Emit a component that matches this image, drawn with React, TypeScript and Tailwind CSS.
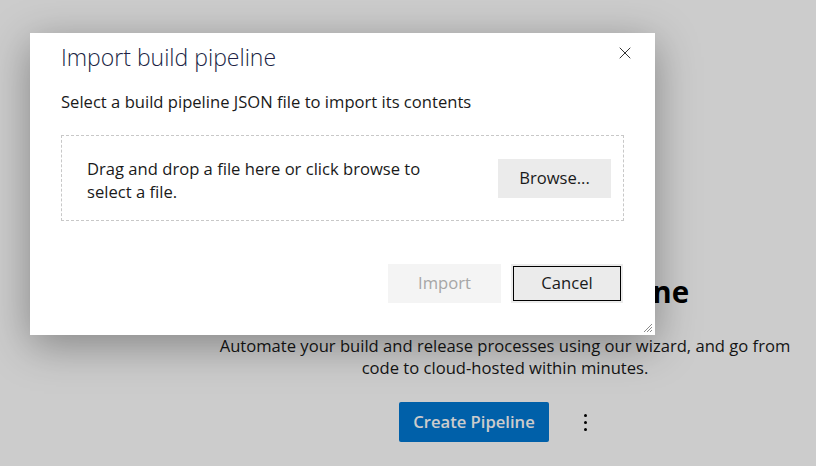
import { X } from "lucide-react";

const font = { fontFamily: '"Open Sans", "Noto Sans", sans-serif' };

function ResizeGrip() {
  return (
    <svg width="12" height="12" viewBox="0 0 12 12" className="text-[#8a8a8a]">
      <path d="M11 3 L3 11 M11 6 L6 11 M11 9 L9 11" stroke="currentColor" strokeWidth="1" />
    </svg>
  );
}

export default function App() {
  return (
    <div
      className="relative h-[466px] w-[816px] overflow-hidden bg-white text-[#1a1a1a]"
      style={font}
    >
      {/* page behind the dialog */}
      <div className="flex h-full pl-[194px]">
        <div className="flex flex-1 flex-col items-center pt-[273px]">
          <h1 className="text-[29.5px] font-bold leading-[38px] text-black">
            Create your first pipeline
          </h1>
          <p className="mt-[24px] max-w-[590px] text-center text-[16.6px] leading-[22px]">
            Automate your build and release processes using our wizard, and go from code to
            cloud-hosted within minutes.
          </p>
          <div className="mt-[23px] flex items-center gap-[35px] pr-[24px]">
            <button className="h-[40px] w-[150px] rounded-[2px] bg-[#0078d4] text-[16.6px] font-semibold text-white">
              Create Pipeline
            </button>
            <span className="flex flex-col gap-[4px]">
              <span className="h-[3px] w-[3px] rounded-full bg-black" />
              <span className="h-[3px] w-[3px] rounded-full bg-black" />
              <span className="h-[3px] w-[3px] rounded-full bg-black" />
            </span>
          </div>
        </div>
      </div>

      {/* dim overlay */}
      <div className="absolute inset-0 bg-black/20" />

      {/* dialog */}
      <div className="absolute left-[30px] top-[33px] flex h-[302px] w-[625px] flex-col bg-white px-[31px] pt-[8px] shadow-[0_10px_40px_rgba(0,0,0,0.35)]">
        <div className="flex items-start justify-between">
          <h2 className="text-[23px] font-light leading-[32px] text-[#201f45]">
            Import build pipeline
          </h2>
          <button className="mr-[-11px] mt-[2px] text-[#333]">
            <X size={20} strokeWidth={1.2} />
          </button>
        </div>
        <p className="mt-[18px] text-[16.6px] leading-[22px] text-[#1a1a1a]">
          Select a build pipeline JSON file to import its contents
        </p>
        <div className="mt-[22px] flex h-[86px] items-center justify-between border border-dashed border-[#c8c8c8] pl-[25px] pr-[12px]">
          <p className="mt-[4px] w-[360px] text-[16.6px] leading-[23px]">
            Drag and drop a file here or click browse to select a file.
          </p>
          <button className="h-[39px] w-[113px] bg-[#ebebeb] text-[16.6px] text-[#1a1a1a]">
            Browse...
          </button>
        </div>
        <div className="mt-[43px] flex justify-end gap-[10px] pr-[1px]">
          <button className="h-[39px] w-[113px] bg-[#f4f4f4] text-[16.6px] text-[#a6a6a6]">
            Import
          </button>
          <button className="flex h-[39px] w-[112px] items-center justify-center bg-[#ebebeb] p-[2px]">
            <span className="flex h-full w-full items-center justify-center border border-black text-[16.6px] text-[#1a1a1a]">
              Cancel
            </span>
          </button>
        </div>
        <div className="absolute bottom-[2px] right-[2px]">
          <ResizeGrip />
        </div>
      </div>
    </div>
  );
}
